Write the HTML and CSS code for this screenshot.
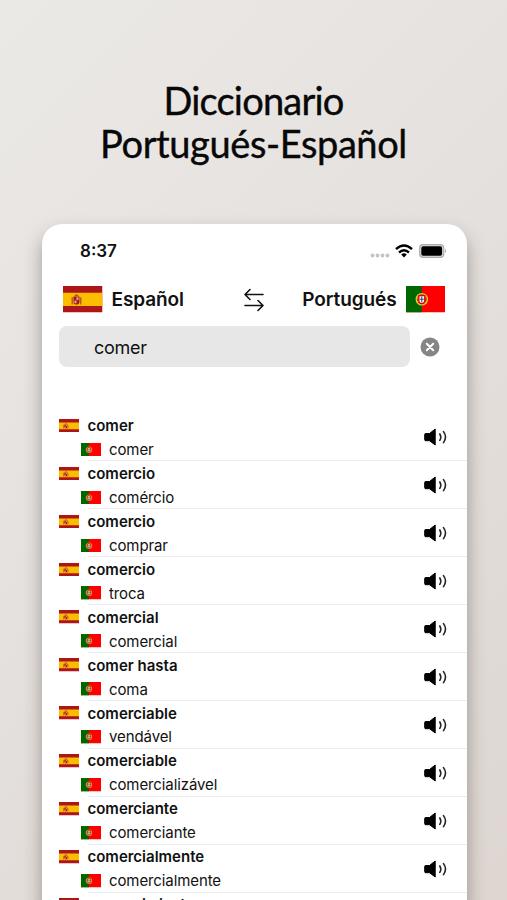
FILE: index.html
```html
<!DOCTYPE html>
<html lang="es">
<head>
<meta charset="utf-8">
<title>Diccionario Portugués-Español</title>
<link rel="stylesheet" href="styles.css">
</head>
<body>
<svg class="defs" aria-hidden="true">
  <symbol id="es" viewBox="0 0 60 40" preserveAspectRatio="none">
    <path fill="#ad1519" d="M0 0h60v40H0z"/><path fill="#fabd00" d="M0 10h60v20H0z"/>
    <path fill="#ad1519" d="M16 16h9v8q0 4-4.500 4t-4.500-4z"/>
    <path fill="#c8b1a0" d="M20.500 17h3v4h-3zM17.500 22h3v4h-3z"/>
    <path fill="#b5502a" d="M17 15q3.500-5 7 0zM13 17h2v11h-2zM26 17h2v11h-2z"/>
  </symbol>
  <symbol id="pt" viewBox="0 0 60 40" preserveAspectRatio="none">
    <path fill="#f00" d="M0 0h60v40H0z"/><path fill="#060" d="M0 0h24v40H0z"/>
    <circle cx="24" cy="20" r="8.500" fill="#a84a10" stroke="#e8c830" stroke-width="2"/>
    <path fill="none" stroke="#e8d020" stroke-width="1.200" d="M16 17q8 8 15 9M16 24q8-1 15-9"/>
    <path fill="#fff" stroke="#e00000" stroke-width="2" d="M19.500 14.500h9v7q0 5-4.500 5t-4.500-5z"/>
    <path stroke="#304090" stroke-width="1.600" d="M24 16v9M21 20h6"/>
  </symbol>
  <symbol id="speaker" viewBox="0 0 24 20">
    <path fill="#000" stroke="#000" stroke-linejoin="round" d="M1.500 6.500h4L11.200 2v16L5.500 13.700h-4q-.8 0-.8-1V7.500q0-1 .8-1z"/>
    <path fill="none" stroke="#222" stroke-width="1.600" stroke-linecap="round" d="M15.800 7q2 3.200 0 6.400M19.500 4.600q4 5.500 0 11"/>
  </symbol>
</svg>
<h1 class="headline"><span class="first">Diccionario</span><br>Portugués-Español</h1>
<main class="phone">
  <div class="status">
    <span class="time">8:37</span>
    <svg class="signal" viewBox="0 0 20 5"><g fill="#c4c4c4"><circle cx="2.500" cy="2.500" r="1.900"/><circle cx="7.500" cy="2.500" r="1.900"/><circle cx="12.500" cy="2.500" r="1.900"/><circle cx="17.500" cy="2.500" r="1.900"/></g></svg>
    <svg class="wifi" viewBox="0 0 18 14"><g fill="none" stroke="#000" stroke-width="2.400"><path d="M1 5.200q8-7.300 16 0M4 8.500q5-4.600 10 0"/></g><path d="M6.200 10.500q2.800-2.400 5.600 0L9 13.400z"/></svg>
    <svg class="battery" viewBox="0 0 28 14"><rect x=".7" y=".7" width="24" height="12.600" rx="3.500" fill="#ddd" stroke="#aaa" stroke-width="1.200"/><rect x="2.300" y="2.300" width="20.800" height="9.400" rx="1.800"/><path fill="#999" d="M26 5q2 2 0 4z"/></svg>
  </div>
  <div class="languages">
    <svg class="flag"><use href="#es"/></svg>
    <span class="from">Español</span>
    <svg class="swap" viewBox="0 0 20 24"><path fill="none" stroke="#111" stroke-width="1.600" stroke-linecap="round" stroke-linejoin="round" d="M19 6.500H1.500M6 1.500l-5 5 5 5M1 17.500h17.500M14 12.500l5 5-5 5"/></svg>
    <span class="to">Portugués</span>
    <svg class="flag"><use href="#pt"/></svg>
  </div>
  <div class="search">
    <div class="field">comer</div>
    <svg class="clear" viewBox="0 0 20 20"><circle cx="10" cy="10" r="9.500" fill="#858585"/><path stroke="#fff" stroke-width="2" stroke-linecap="round" d="M6.800 6.800l6.400 6.400M13.200 6.800l-6.400 6.400"/></svg>
  </div>
  <ul class="results">
    <li><svg class="mini"><use href="#es"/></svg><b>comer</b><svg class="mini pt"><use href="#pt"/></svg><span>comer</span><svg class="sound"><use href="#speaker"/></svg></li>
    <li><svg class="mini"><use href="#es"/></svg><b>comercio</b><svg class="mini pt"><use href="#pt"/></svg><span>comércio</span><svg class="sound"><use href="#speaker"/></svg></li>
    <li><svg class="mini"><use href="#es"/></svg><b>comercio</b><svg class="mini pt"><use href="#pt"/></svg><span>comprar</span><svg class="sound"><use href="#speaker"/></svg></li>
    <li><svg class="mini"><use href="#es"/></svg><b>comercio</b><svg class="mini pt"><use href="#pt"/></svg><span>troca</span><svg class="sound"><use href="#speaker"/></svg></li>
    <li><svg class="mini"><use href="#es"/></svg><b>comercial</b><svg class="mini pt"><use href="#pt"/></svg><span>comercial</span><svg class="sound"><use href="#speaker"/></svg></li>
    <li><svg class="mini"><use href="#es"/></svg><b>comer hasta</b><svg class="mini pt"><use href="#pt"/></svg><span>coma</span><svg class="sound"><use href="#speaker"/></svg></li>
    <li><svg class="mini"><use href="#es"/></svg><b>comerciable</b><svg class="mini pt"><use href="#pt"/></svg><span>vendável</span><svg class="sound"><use href="#speaker"/></svg></li>
    <li><svg class="mini"><use href="#es"/></svg><b>comerciable</b><svg class="mini pt"><use href="#pt"/></svg><span>comercializável</span><svg class="sound"><use href="#speaker"/></svg></li>
    <li><svg class="mini"><use href="#es"/></svg><b>comerciante</b><svg class="mini pt"><use href="#pt"/></svg><span>comerciante</span><svg class="sound"><use href="#speaker"/></svg></li>
    <li><svg class="mini"><use href="#es"/></svg><b>comercialmente</b><svg class="mini pt"><use href="#pt"/></svg><span>comercialmente</span><svg class="sound"><use href="#speaker"/></svg></li>
    <li><svg class="mini"><use href="#es"/></svg><b>comercio justo</b></li>
  </ul>
</main>
</body>
</html>
```
FILE: styles.css
```css
* { box-sizing: border-box; }
body {
  margin: 0;
  height: 900px;
  overflow: hidden;
  background: linear-gradient(135deg, #ebe9e6 0%, #e5e1de 45%, #ddd6d1 100%);
  font-family: Inter, "Liberation Sans", sans-serif;
  color: #111;
}
.defs { display: block; width: 0; height: 0; }
svg { display: block; flex: none; }
.headline {
  margin: 0;
  padding-top: 79px;
  height: 224px;
  text-align: center;
  font: 400 38px/43px Lato, sans-serif;
  letter-spacing: -0.4px;
  color: #080808;
  -webkit-text-stroke: 0.4px #080808;
}
.first { letter-spacing: -0.8px; }
.phone {
  width: 425px;
  height: 700px;
  margin-left: 41.500px;
  background: #fff;
  border-radius: 20px 20px 0 0;
  box-shadow: 0 10px 18px rgba(60, 50, 45, .42);
}
.status {
  display: flex;
  align-items: center;
  height: 54px;
  padding: 0 20px 0 38.500px;
}
.time { flex: 1; font-size: 17px; font-weight: 600; }
.signal { width: 20px; height: 5px; margin: 9px 5px 0 0; }
.wifi { width: 18px; height: 14px; margin-right: 6px; }
.battery { width: 28px; height: 14px; }
.languages {
  display: flex;
  align-items: center;
  height: 43px;
  padding: 0 21.500px;
  font-size: 19px;
  font-weight: 600;
  letter-spacing: -0.1px;
}
.flag { width: 39.500px; height: 26.500px; }
.from { width: 141px; padding-left: 9px; }
.swap { width: 20px; height: 24px; }
.to { flex: 1; padding-right: 9px; text-align: right; }
.search { display: flex; align-items: center; padding: 5px 0 0 17.500px; }
.field {
  width: 351px;
  height: 41px;
  padding-left: 35px;
  border-radius: 8px;
  background: #e7e7e7;
  font-size: 18px;
  line-height: 43px;
  letter-spacing: -0.3px;
}
.clear { width: 20px; height: 20px; margin-left: 9.500px; }
.results { margin: 46.500px 0 0; padding: 0; list-style: none; }
.results li {
  display: grid;
  grid-template-columns: 22px 7px 20px 1fr 42.500px;
  grid-template-rows: 24px 23.930px;
  align-items: center;
  height: 47.930px;
  padding-left: 17px;
  background: linear-gradient(#ececec, #ececec) 46px 100% / 100% 1px no-repeat;
  font-size: 15px;
}
.mini { width: 20px; height: 13.500px; grid-column: 1; }
.mini.pt { grid-column: 2 / 4; grid-row: 2; justify-self: end; margin-right: 7px; }
.results b { grid-column: 3 / 5; grid-row: 1; font-weight: 600; }
.results span { grid-column: 4; grid-row: 2; padding-left: 1.500px; letter-spacing: -0.1px; }
.sound { width: 24px; height: 20px; grid-column: 5; grid-row: 1 / 3; }
```
